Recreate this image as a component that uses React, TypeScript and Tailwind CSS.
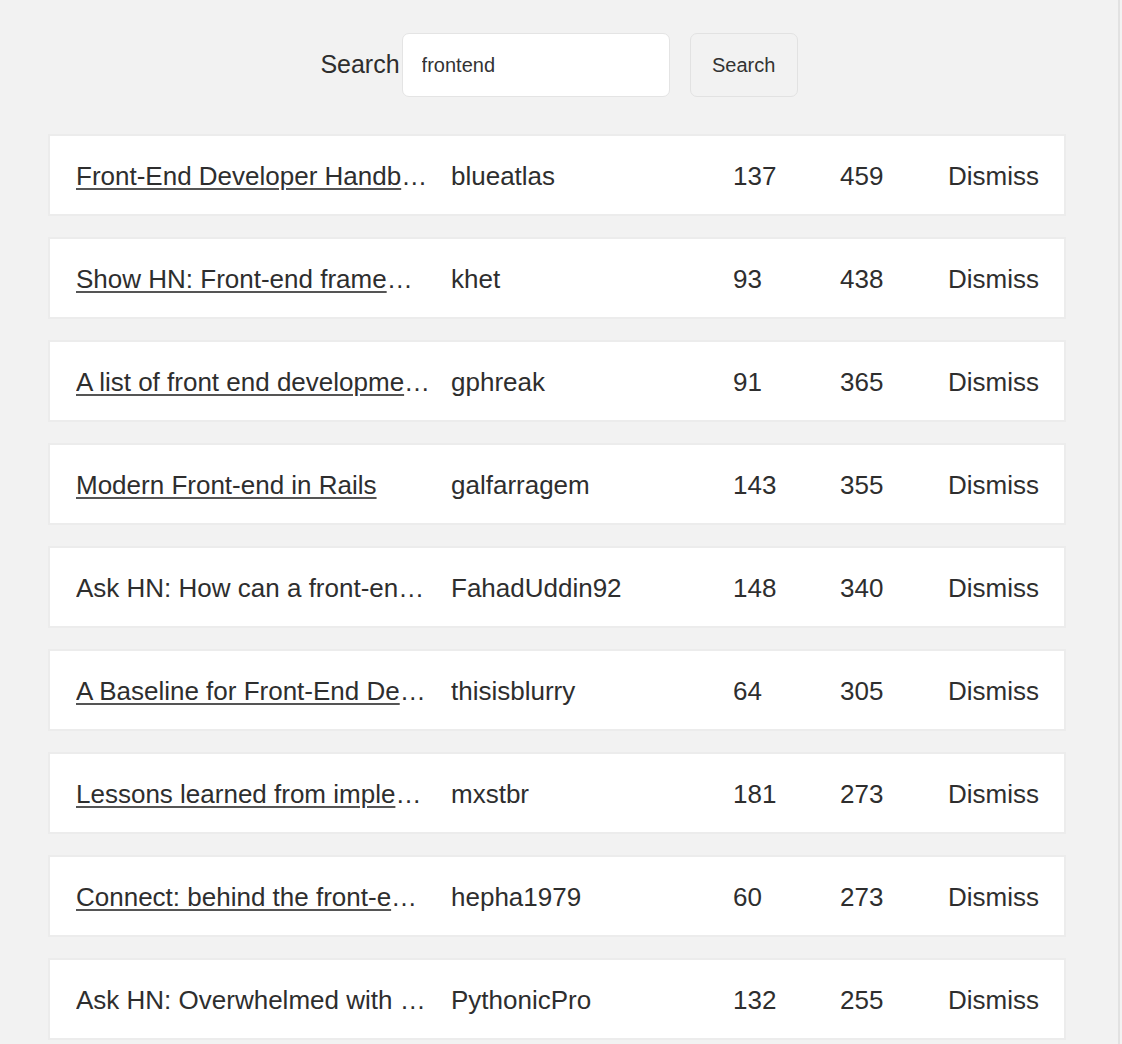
import React from 'react'

type Story = {
  title: string
  url?: string
  author: string
  comments: number
  points: number
}

const stories: Story[] = [
  { title: 'Front-End Developer Handbook 2017', url: '#', author: 'blueatlas', comments: 137, points: 459 },
  { title: 'Show HN: Front-end framework for building web apps', url: '#', author: 'khet', comments: 93, points: 438 },
  { title: 'A list of front end development resources', url: '#', author: 'gphreak', comments: 91, points: 365 },
  { title: 'Modern Front-end in Rails', url: '#', author: 'galfarragem', comments: 143, points: 355 },
  { title: 'Ask HN: How can a front-end developer become full stack?', author: 'FahadUddin92', comments: 148, points: 340 },
  { title: 'A Baseline for Front-End Developers', url: '#', author: 'thisisblurry', comments: 64, points: 305 },
  { title: 'Lessons learned from implementing a front-end', url: '#', author: 'mxstbr', comments: 181, points: 273 },
  { title: 'Connect: behind the front-end experience', url: '#', author: 'hepha1979', comments: 60, points: 273 },
  { title: 'Ask HN: Overwhelmed with learning front-end', author: 'PythonicPro', comments: 132, points: 255 },
]

function SearchBar() {
  return (
    <form className="flex items-center justify-center pt-[33px]" onSubmit={(e) => e.preventDefault()}>
      <label className="text-[25px] text-[#2e2e2e] mr-[2px]">Search</label>
      <input
        defaultValue="frontend"
        className="h-[64px] w-[268px] rounded-[7px] border border-[#e4e4e4] bg-white px-[19px] text-[20px] text-[#333] outline-none"
      />
      <button
        type="submit"
        className="ml-[20px] h-[64px] w-[108px] rounded-[7px] border border-[#e2e2e2] bg-[#f2f2f2] text-[20px] text-[#333]"
      >
        Search
      </button>
    </form>
  )
}

function Row({ story }: { story: Story }) {
  return (
    <div className="flex h-[82px] items-center border-2 border-[#ececec] bg-white pl-[26px] pt-[3px] text-[26px] text-[#2e2e2e]">
      <span className="w-[375px] shrink-0 pr-[20px]">
        <span className="block truncate">
          {story.url ? (
            <a href={story.url} className="underline decoration-[#555] underline-offset-[3px]">
              {story.title}
            </a>
          ) : (
            story.title
          )}
        </span>
      </span>
      <span className="w-[282px] shrink-0">{story.author}</span>
      <span className="w-[107px] shrink-0">{story.comments}</span>
      <span className="w-[108px] shrink-0">{story.points}</span>
      <span>Dismiss</span>
    </div>
  )
}

export default function App() {
  return (
    <div className="flex h-[1044px] overflow-hidden bg-[#f2f2f2]" style={{ fontFamily: '"Liberation Sans", Arial, sans-serif' }}>
      <main className="w-[1118px] shrink-0">
        <SearchBar />
        <div className="ml-[48px] mt-[37px] flex w-[1018px] flex-col gap-[21px]">
          {stories.map((s) => (
            <Row key={s.author + s.points} story={s} />
          ))}
        </div>
      </main>
      <div className="flex-1 border-l-2 border-[#e2e2e2] bg-[#f3f3f3]" />
    </div>
  )
}
